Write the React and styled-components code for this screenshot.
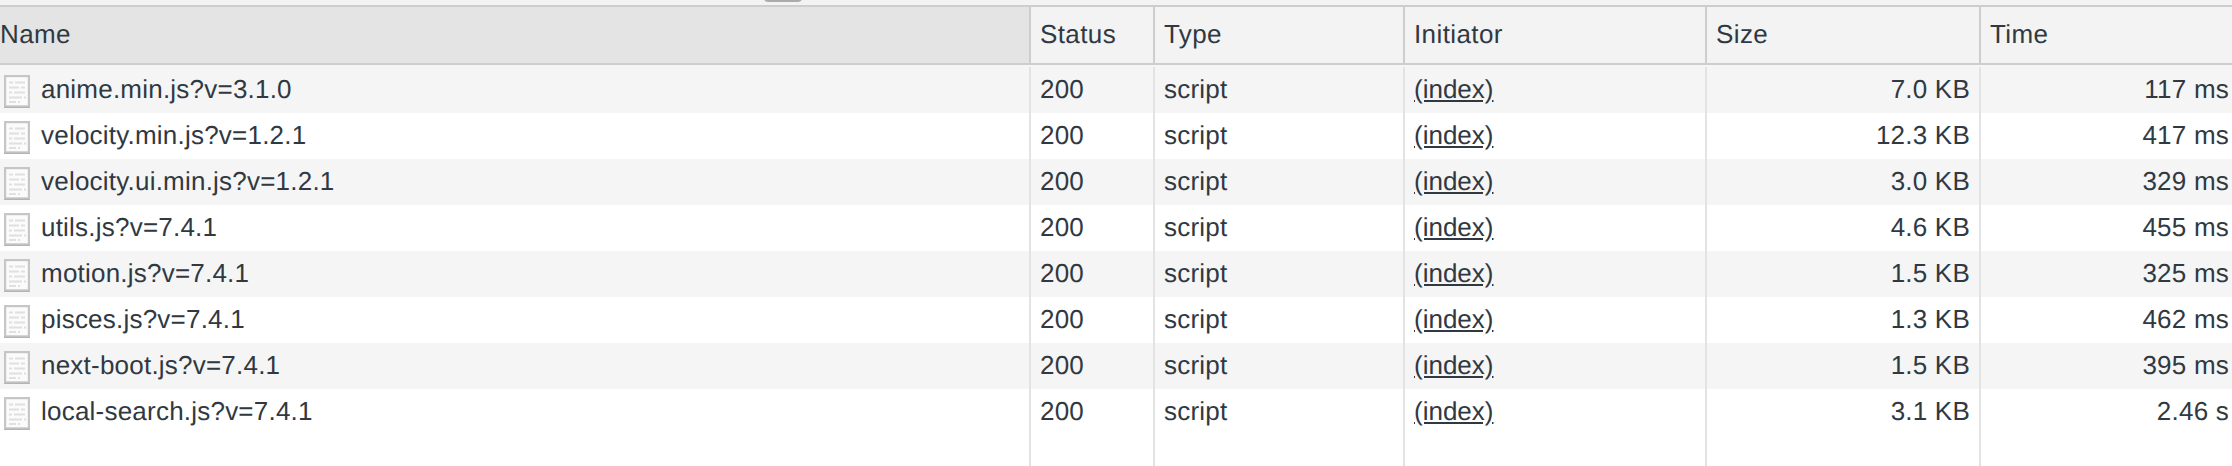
import React from "react";
import styled, { createGlobalStyle } from "styled-components";

const Global = createGlobalStyle`
  html, body { margin: 0; padding: 0; height: 100%; background: #fff; overflow: hidden; }
  #root { height: 100%; }
`;

const columns = "1029px 124px 250px 302px 274px 253px";

const Page = styled.div`
  position: relative;
  height: 466px;
  display: flex;
  flex-direction: column;
  font-family: "Liberation Sans", Arial, sans-serif;
  font-size: 26px;
  letter-spacing: 0.22px;
  text-rendering: geometricPrecision;
  color: #303942;
  background: #fff;
`;
const TopStrip = styled.div`
  height: 5px;
  background: #f3f3f3;
  border-bottom: 2px solid #cdcdcd;
  flex: none;
`;
const Handle = styled.div`
  position: absolute;
  left: 764px;
  top: -6px;
  width: 38px;
  height: 8px;
  border-radius: 5px;
  background: #ababab;
`;
const HeaderRow = styled.div`
  display: grid;
  grid-template-columns: ${columns};
  height: 56px;
  flex: none;
  border-bottom: 2px solid #cdcdcd;
  background: #f3f3f3;
`;
const HeaderCell = styled.div`
  display: flex;
  align-items: center;
  padding: 0 0 2px ${p => (p.$first ? 0 : 9)}px;
  letter-spacing: 0.4px;
  background: ${p => (p.$first ? "#e4e4e4" : "#f3f3f3")};
  border-left: ${p => (p.$first ? "none" : "2px solid #cdcdcd")};
`;
const Body = styled.div`
  flex: 1;
  display: flex;
  flex-direction: column;
  padding-top: 2px;
  background: #f5f5f5;
`;
const Row = styled.div`
  display: grid;
  grid-template-columns: ${columns};
  height: 46px;
  flex: none;
  background: ${p => (p.$odd ? "#f5f5f5" : "#fff")};
`;
const Filler = styled.div`
  display: grid;
  grid-template-columns: ${columns};
  flex: 1;
  background: #fff;
`;
const Cell = styled.div`
  display: flex;
  align-items: center;
  justify-content: ${p => (p.$endPad !== undefined ? "flex-end" : "flex-start")};
  padding: 0 ${p => p.$endPad ?? 0}px 1px ${p => (p.$first ? 4 : 9)}px;
  border-left: ${p => (p.$first ? "none" : "2px solid #e3e3e3")};
  white-space: nowrap;
  overflow: hidden;
`;
const FileIcon = styled.svg`
  width: 26px;
  height: 33px;
  flex: none;
  margin: 4px 11px 0 0;
`;
const Link = styled.span`
  letter-spacing: 0;
  text-decoration: underline;
`;

const DocIcon = () => (
  <FileIcon viewBox="0 0 26 33">
    <rect x="1" y="1" width="24" height="30.5" fill="#fbfbfb" stroke="#c6c6c6" strokeWidth="2.4" />
    <path d="M0 32.4h26" stroke="#b4b4b4" strokeWidth="1.2" />
    <path d="M5 7.5h4M11 7.5h10M5 12.5h10M17 12.5h4M5 17.5h3M10 17.5h11M5 22.5h13M20 22.5h2M5 27h7M14 27h2" stroke="#e0e0e0" strokeWidth="2.2" />
  </FileIcon>
);

const rows = [
  ["anime.min.js?v=3.1.0", "7.0 KB", "117 ms"],
  ["velocity.min.js?v=1.2.1", "12.3 KB", "417 ms"],
  ["velocity.ui.min.js?v=1.2.1", "3.0 KB", "329 ms"],
  ["utils.js?v=7.4.1", "4.6 KB", "455 ms"],
  ["motion.js?v=7.4.1", "1.5 KB", "325 ms"],
  ["pisces.js?v=7.4.1", "1.3 KB", "462 ms"],
  ["next-boot.js?v=7.4.1", "1.5 KB", "395 ms"],
  ["local-search.js?v=7.4.1", "3.1 KB", "2.46 s"],
];

const heads = ["Name", "Status", "Type", "Initiator", "Size", "Time"];

export default function App() {
  return (
    <Page>
      <Global />
      <TopStrip />
      <Handle />
      <HeaderRow>
        {heads.map((h, i) => (
          <HeaderCell key={h} $first={i === 0}>{h}</HeaderCell>
        ))}
      </HeaderRow>
      <Body>
        {rows.map(([name, size, time], i) => (
          <Row key={name} $odd={i % 2 === 0}>
            <Cell $first><DocIcon />{name}</Cell>
            <Cell>200</Cell>
            <Cell>script</Cell>
            <Cell><Link>(index)</Link></Cell>
            <Cell $endPad={9}>{size}</Cell>
            <Cell $endPad={3}>{time}</Cell>
          </Row>
        ))}
        <Filler>
          <div /><Cell /><Cell /><Cell /><Cell /><Cell />
        </Filler>
      </Body>
    </Page>
  );
}
